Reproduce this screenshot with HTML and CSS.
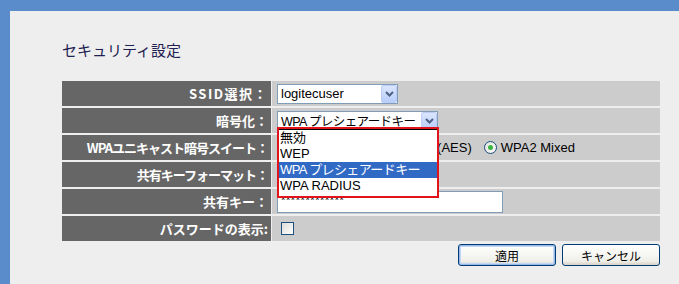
FILE: index.html
```html
<!DOCTYPE html>
<html lang="ja">
<head>
<meta charset="utf-8">
<title>セキュリティ設定</title>
<link rel="stylesheet" href="styles.css">
</head>
<body>
<div class="frame">
  <h1 class="title">セキュリティ設定</h1>
  <div class="table">
    <div class="label wide">SSID選択：</div>
    <div class="value">
      <div class="select s1"><span class="sel-text">logitecuser</span><span class="arrow"><svg width="9" height="6" viewBox="0 0 9 6"><path d="M1 1 L4.5 4.5 L8 1" fill="none" stroke="#4d6185" stroke-width="2"/></svg></span></div>
    </div>
    <div class="label">暗号化：</div>
    <div class="value rel">
      <div class="select s2"><span class="sel-text jp">WPA プレシェアードキー</span><span class="arrow"><svg width="9" height="6" viewBox="0 0 9 6"><path d="M1 1 L4.5 4.5 L8 1" fill="none" stroke="#4d6185" stroke-width="2"/></svg></span></div>
      <div class="dropdown">
        <div class="list">
          <div class="opt">無効</div>
          <div class="opt">WEP</div>
          <div class="opt hl jp">WPA プレシェアードキー</div>
          <div class="opt">WPA RADIUS</div>
        </div>
      </div>
    </div>
    <div class="label tight">WPAユニキャスト暗号スイート：</div>
    <div class="value radios">
      <span class="ropt"><span class="radio"></span>WPA(TKIP)</span>
      <span class="ropt"><span class="radio"></span>WPA2(AES)</span>
      <span class="ropt"><span class="radio on"></span>WPA2 Mixed</span>
    </div>
    <div class="label tight">共有キーフォーマット：</div>
    <div class="value"></div>
    <div class="label">共有キー：</div>
    <div class="value"><div class="input">*************</div></div>
    <div class="label">パスワードの表示:</div>
    <div class="value"><span class="check"></span></div>
  </div>
  <div class="buttons">
    <button class="btn focus">適用</button>
    <button class="btn">キャンセル</button>
  </div>
</div>
</body>
</html>
```
FILE: styles.css
```css
html, body {
  margin: 0;
  padding: 0;
  height: 100%;
}
body {
  background: #5a8ccc;
  overflow: hidden;
  font-family: "Liberation Sans", "Noto Sans CJK JP", sans-serif;
}
.frame {
  margin: 11px 0 0 10px;
  background: #eeeeee;
  height: calc(100% - 11px);
  padding: 29px 0 0 52px;
  box-sizing: border-box;
}
.title {
  margin: 0 0 21px 0;
  font-family: "Noto Sans CJK JP", sans-serif;
  font-weight: normal;
  font-size: 15px;
  line-height: 20px;
  height: 20px;
  color: #1f2152;
}
.table {
  width: 598px;
  display: grid;
  grid-template-columns: 209px 388px;
  column-gap: 1px;
  row-gap: 2px;
  grid-auto-rows: 25px;
}
.label {
  background: #666666;
  color: #ffffff;
  font-family: "Noto Sans CJK JP", sans-serif;
  font-weight: bold;
  font-size: 13px;
  line-height: 25px;
  text-align: right;
  padding-right: 3px;
  white-space: nowrap;
  text-spacing-trim: space-all;
}
.label.wide { letter-spacing: 1.5px; }
.label.tight { letter-spacing: -1px; }
.value {
  background: #cccccc;
  padding-left: 5px;
  display: flex;
  align-items: center;
}
.rel { position: relative; }
.select {
  box-sizing: border-box;
  height: 20px;
  border: 1px solid #7f9db9;
  background: #ffffff;
  display: flex;
  align-items: center;
  justify-content: space-between;
  font-size: 13px;
  color: #000;
}
.s1 { width: 121px; }
.s2 { width: 161px; }
.sel-text {
  padding-left: 3px;
  white-space: nowrap;
  font-family: "Liberation Sans", "Noto Sans CJK JP", sans-serif;
}
.jp {
  font-size: 12.5px;
  letter-spacing: -0.6px;
}
.arrow {
  box-sizing: border-box;
  width: 16px;
  height: 18px;
  background: linear-gradient(#dbe6fd, #b8cdfb);
  border: 1px solid #bccef7;
  border-radius: 2px;
  display: flex;
  align-items: center;
  justify-content: center;
  flex: none;
}
.dropdown {
  position: absolute;
  left: 5px;
  top: 19px;
  width: 162px;
  height: 71px;
  box-sizing: border-box;
  border: 2px solid #e0141a;
  background: #ffffff;
  z-index: 5;
}
.list {
  border-top: 1px solid #000;
}
.opt {
  height: 16px;
  line-height: 16px;
  font-size: 13px;
  padding-left: 1px;
  white-space: nowrap;
  color: #000;
}
.opt.hl {
  background: #316ac5;
  color: #ffffff;
}
.radios {
  font-size: 13px;
  color: #000;
}
.ropt {
  display: flex;
  align-items: center;
  margin-right: 8px;
  white-space: nowrap;
}
.ropt:first-child { margin-right: 16px; }
.radio {
  box-sizing: border-box;
  width: 13px;
  height: 13px;
  border-radius: 50%;
  border: 1px solid #1c5180;
  background: radial-gradient(circle at 60% 60%, #ffffff, #dcdcd4);
  margin: 0 4px 0 4px;
  position: relative;
}
.radio.on::after {
  content: "";
  position: absolute;
  left: 3px;
  top: 3px;
  width: 5px;
  height: 5px;
  border-radius: 50%;
  background: #3cb440;
}
.input {
  box-sizing: border-box;
  width: 226px;
  height: 22px;
  border: 1px solid #7f9db9;
  background: #ffffff;
  font-size: 11px;
  line-height: 12px;
  padding: 2px 0 0 3px;
  letter-spacing: 0.6px;
  color: #000;
  margin-top: 1px;
}
.check {
  box-sizing: border-box;
  width: 13px;
  height: 13px;
  border: 1px solid #1c5180;
  background: linear-gradient(135deg, #dcdcd7, #ffffff);
  margin-left: 4px;
}
.buttons {
  width: 598px;
  display: flex;
  justify-content: flex-end;
  gap: 6px;
  margin-top: 3px;
}
.btn {
  box-sizing: border-box;
  width: 98px;
  height: 22px;
  border: 1px solid #003c74;
  border-radius: 3px;
  background: linear-gradient(#ffffff, #f0f0ea 80%, #d6d0c5);
  font-family: "Noto Sans CJK JP", sans-serif;
  font-size: 12px;
  color: #000;
  padding: 0;
}
.btn.focus {
  box-shadow: inset 0 0 0 1px #98b8ea, inset 0 0 0 2px #c2d6f5;
}
```
